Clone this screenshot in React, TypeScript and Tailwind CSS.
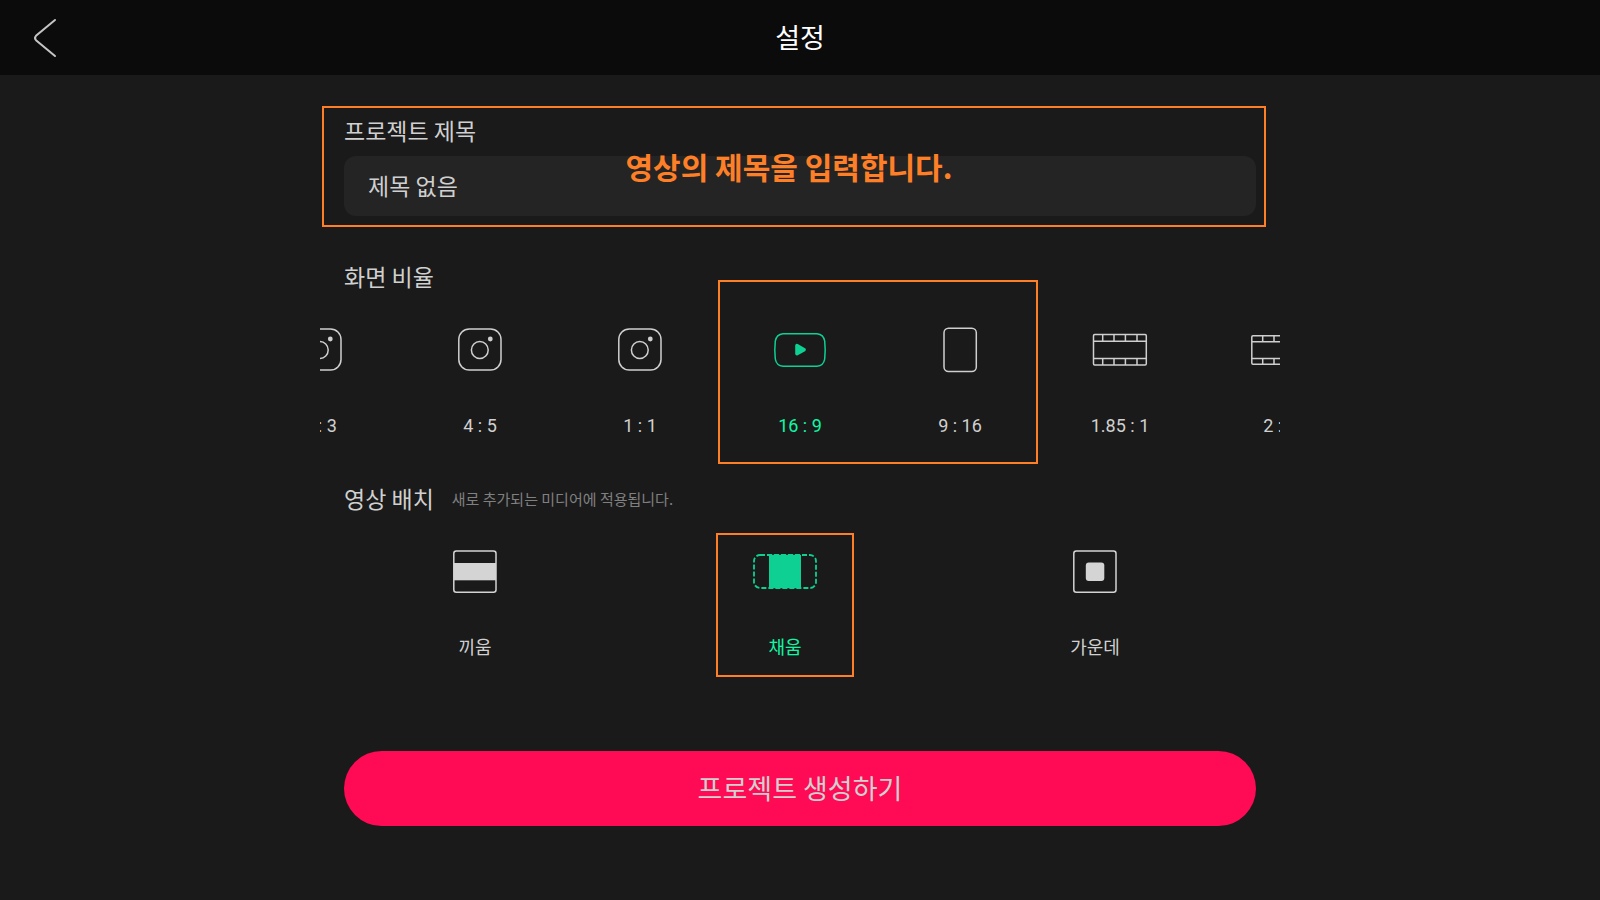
import { ReactNode, useState } from "react";

interface OptionProps {
    icon: ReactNode;
    label: string;
    active: boolean;
    onSelect: () => void;
}

function Drawing({ children }: { children: ReactNode }) {
    return (
        <svg
            viewBox="0 0 64 48"
            className="w-16 h-12"
            fill="none"
            stroke="currentColor"
            strokeWidth="1.5"
            aria-hidden="true"
        >
            {children}
        </svg>
    );
}

function InstagramIcon() {
    return (
        <Drawing>
            <rect x="10.8" y="3" width="42.2" height="41" rx="10.5" />
            <circle cx="31.8" cy="24" r="8.4" />
            <circle cx="42.3" cy="13" r="2.4" fill="currentColor" stroke="none" />
        </Drawing>
    );
}

function YoutubeIcon() {
    return (
        <Drawing>
            <path d="M15 7.7H49Q55.6 8.4 56.7 15Q57.7 24 56.7 33Q55.6 39.6 49 40.3H15Q8.4 39.6 7.3 33Q6.3 24 7.3 15Q8.4 8.4 15 7.7Z" />
            <path
                d="M28.9 19.6V27.8L36.2 23.7Z"
                fill="currentColor"
                strokeWidth="3.4"
                strokeLinejoin="round"
            />
        </Drawing>
    );
}

function PhoneIcon() {
    return (
        <Drawing>
            <rect x="16" y="2.3" width="32.3" height="43.2" rx="4.5" />
        </Drawing>
    );
}

function FilmIcon() {
    return (
        <Drawing>
            <rect x="5.5" y="8.5" width="52.8" height="30.4" rx="1.2" />
            <path d="M5.5 15.2H58.3M5.5 32.4H58.3" />
            <path d="M14.7 8.5V15.2M26 8.5V15.2M37.4 8.5V15.2M49 8.5V15.2" />
            <path d="M14.7 32.4V38.9M26 32.4V38.9M37.4 32.4V38.9M49 32.4V38.9" />
        </Drawing>
    );
}

function WideFilmIcon() {
    return (
        <Drawing>
            <rect x="3.8" y="9.7" width="56.4" height="28.6" rx="1.2" />
            <path d="M3.8 15.8H60.2M3.8 32.4H60.2" />
            <path d="M14.7 9.7V15.8M26 9.7V15.8M37.4 9.7V15.8M49 9.7V15.8" />
            <path d="M14.7 32.4V38.3M26 32.4V38.3M37.4 32.4V38.3M49 32.4V38.3" />
        </Drawing>
    );
}

function FitIcon() {
    return (
        <Drawing>
            <rect x="10.8" y="3" width="42.2" height="41.2" rx="2.5" />
            <rect x="10.8" y="15" width="42.2" height="17.3" fill="currentColor" stroke="none" />
        </Drawing>
    );
}

function FillIcon() {
    return (
        <Drawing>
            <rect x="1" y="7" width="62" height="33" rx="6" strokeWidth="1.8" strokeDasharray="5 2" />
            <rect x="16" y="6.8" width="32" height="33.4" fill="currentColor" stroke="none" />
        </Drawing>
    );
}

function CenterIcon() {
    return (
        <Drawing>
            <rect x="10.8" y="3" width="42.2" height="41.2" rx="2.5" />
            <rect x="22.8" y="14.5" width="18.5" height="18.5" rx="3" fill="currentColor" stroke="none" />
        </Drawing>
    );
}

function RatioOption({ icon, label, active, onSelect }: OptionProps) {
    return (
        <button
            type="button"
            aria-pressed={active}
            onClick={onSelect}
            className="w-40 shrink-0 flex flex-col items-center gap-10 cursor-pointer"
        >
            <span className={active ? "text-[#0ed093]" : "text-[#cfcfcf]"}>{icon}</span>
            <span
                className={`font-[Roboto,sans-serif] text-[18px] leading-6 ${
                    active ? "text-[#10f8a4]" : "text-[#d0d0d0]"
                }`}
            >
                {label}
            </span>
        </button>
    );
}

function LayoutOption({ icon, label, active, onSelect, highlighted }: OptionProps & { highlighted?: boolean }) {
    return (
        <button
            type="button"
            aria-pressed={active}
            onClick={onSelect}
            className="relative flex-1 flex flex-col items-center gap-[38px] cursor-pointer"
        >
            <span className={active ? "text-[#0ed093]" : "text-[#d4d4d4]"}>{icon}</span>
            <span className={`text-[18px] leading-6 ${active ? "text-[#10f8a4]" : "text-[#d0d0d0]"}`}>
                {label}
            </span>
            {highlighted && (
                <span className="absolute -top-[15px] -bottom-[19px] left-1/2 w-[138px] -translate-x-1/2 border-2 border-[#ff7f27] pointer-events-none" />
            )}
        </button>
    );
}

const ratios = [
    { label: "4 : 3", icon: <InstagramIcon /> },
    { label: "4 : 5", icon: <InstagramIcon /> },
    { label: "1 : 1", icon: <InstagramIcon /> },
    { label: "16 : 9", icon: <YoutubeIcon /> },
    { label: "9 : 16", icon: <PhoneIcon /> },
    { label: "1.85 : 1", icon: <FilmIcon /> },
    { label: "2 : 1", icon: <WideFilmIcon /> },
];

const layouts = [
    { label: "끼움", icon: <FitIcon /> },
    { label: "채움", icon: <FillIcon />, highlighted: true },
    { label: "가운데", icon: <CenterIcon /> },
];

export default function App() {
    const [ratio, setRatio] = useState("16 : 9");
    const [layout, setLayout] = useState("채움");

    return (
        <div className="min-h-screen bg-[#1a1a1a] text-[#d0d0d0] font-['Noto_Sans_CJK_KR',sans-serif]">
            <header className="h-[75px] px-6 pb-0.5 bg-[#0b0b0b] grid grid-cols-[1fr_auto_1fr] items-center">
                <button type="button" aria-label="뒤로" className="w-10 h-12 cursor-pointer">
                    <svg
                        viewBox="0 0 40 48"
                        className="w-10 h-12"
                        fill="none"
                        stroke="#c4c4c4"
                        strokeWidth="2"
                        strokeLinecap="round"
                    >
                        <path d="M31 7L12 22.8Q10 25 12 27.2L31 43" />
                    </svg>
                </button>
                <h1 className="text-[27px] leading-10 text-white">설정</h1>
            </header>

            <main className="w-3/5 mx-auto pt-[39px] pb-16">
                <section className="relative mx-6">
                    <label htmlFor="title" className="block text-[23px] leading-8">
                        프로젝트 제목
                    </label>
                    <input
                        id="title"
                        type="text"
                        defaultValue="제목 없음"
                        className="block mt-2.5 w-full h-[60px] px-6 pb-0.5 rounded-xl bg-[#242424] text-[23px] outline-none"
                    />
                    <div className="absolute -top-2 -bottom-[11px] -left-[22px] -right-[10px] pt-[38px] border-2 border-[#ff7f27] text-center pointer-events-none">
                        <p className="pr-2.5 text-[30px] leading-10 font-bold text-[#ff7f27]">
                            영상의 제목을 입력합니다.
                        </p>
                    </div>
                </section>

                <section className="relative mt-11">
                    <h2 className="mx-6 text-[23px] leading-8">화면 비율</h2>
                    <div className="mt-[34px] flex justify-center overflow-hidden">
                        {ratios.map((item) => (
                            <RatioOption
                                key={item.label}
                                icon={item.icon}
                                label={item.label}
                                active={item.label === ratio}
                                onSelect={() => setRatio(item.label)}
                            />
                        ))}
                    </div>
                    <div className="absolute top-5 -bottom-[26px] left-1/2 -ml-[82px] w-80 border-2 border-[#ff7f27] pointer-events-none" />
                </section>

                <section className="mt-11">
                    <div className="mx-6 flex items-center gap-[18px]">
                        <h2 className="text-[23px] leading-8">영상 배치</h2>
                        <p className="pt-0.5 text-[15px] leading-6 text-[#808080]">새로 추가되는 미디어에 적용됩니다.</p>
                    </div>
                    <div className="mt-[34px] mr-[30px] flex">
                        {layouts.map((item) => (
                            <LayoutOption
                                key={item.label}
                                icon={item.icon}
                                label={item.label}
                                highlighted={item.highlighted}
                                active={item.label === layout}
                                onSelect={() => setLayout(item.label)}
                            />
                        ))}
                    </div>
                </section>

                <div className="mx-6 mt-[93px]">
                    <button
                        type="button"
                        className="block w-full h-[75px] pb-0.5 rounded-full bg-[#ff0a54] text-[27px] leading-10 cursor-pointer"
                    >
                        프로젝트 생성하기
                    </button>
                </div>
            </main>
        </div>
    );
}
